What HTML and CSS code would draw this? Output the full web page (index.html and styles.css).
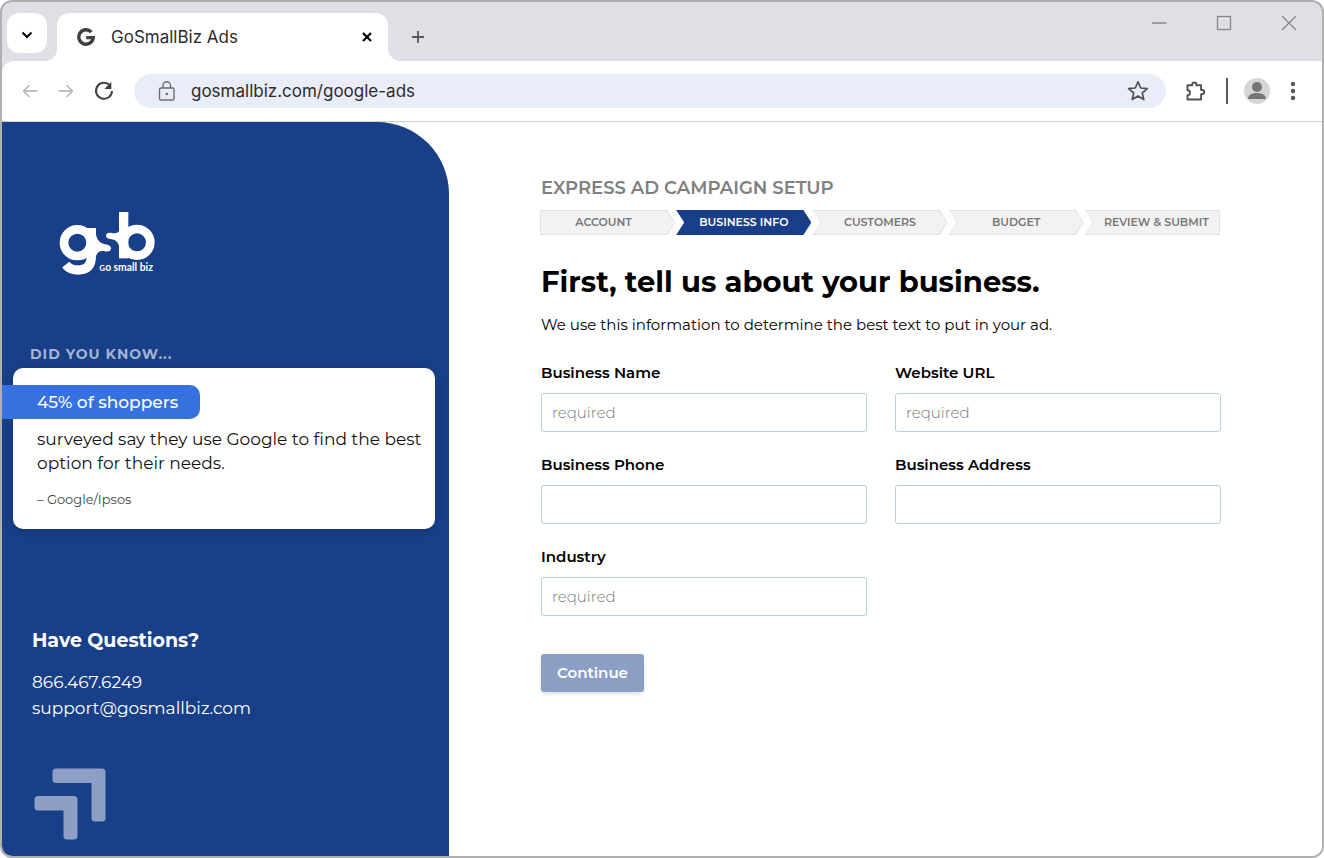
FILE: index.html
```html
<!DOCTYPE html>
<html lang="en">
<head>
<meta charset="utf-8">
<meta name="viewport" content="width=device-width, initial-scale=1">
<title>GoSmallBiz Ads</title>
<link rel="stylesheet" href="styles.css">
</head>
<body>
<div class="window">
  <header class="tabstrip">
    <button class="tab-search" type="button" aria-label="Search tabs">
      <svg width="12" height="8" viewBox="0 0 12 8"><path d="M1.500 1.500 6 6l4.500-4.500" fill="none" stroke="#000" stroke-width="2"/></svg>
    </button>
    <div class="tab">
      <svg class="tab-icon" width="18" height="18" viewBox="0 0 18 18"><path d="M14.400 4.200A7.200 7.200 0 1 0 16.200 9.600H9.200" fill="none" stroke="#3f4043" stroke-width="3.400"/></svg>
      <span class="tab-title">GoSmallBiz Ads</span>
      <button class="icon-btn" type="button" aria-label="Close tab">
        <svg width="10" height="10" viewBox="0 0 10 10"><path d="M1 1l8 8M9 1L1 9" stroke="#000" stroke-width="2.200"/></svg>
      </button>
    </div>
    <button class="icon-btn new-tab" type="button" aria-label="New tab">
      <svg width="12" height="12" viewBox="0 0 12 12"><path d="M6 0v12M0 6h12" stroke="#55575b" stroke-width="1.800"/></svg>
    </button>
    <div class="controls">
      <button class="icon-btn" type="button" aria-label="Minimize"><svg width="16" height="16" viewBox="0 0 16 16"><path d="M1 8h14.500" stroke="#85878b" stroke-width="1.300"/></svg></button>
      <button class="icon-btn" type="button" aria-label="Maximize"><svg width="16" height="16" viewBox="0 0 16 16"><rect x="1.500" y="1.500" width="13" height="13" fill="none" stroke="#85878b" stroke-width="1.300"/></svg></button>
      <button class="icon-btn" type="button" aria-label="Close"><svg width="16" height="16" viewBox="0 0 16 16"><path d="M1 1l14 14M15 1L1 15" stroke="#85878b" stroke-width="1.300"/></svg></button>
    </div>
  </header>

  <div class="toolbar">
    <button class="icon-btn" type="button" aria-label="Back"><svg width="16" height="14" viewBox="0 0 16 14"><path d="M15.500 7H1.500M7.500 1 1.500 7l6 6" fill="none" stroke="#b0b0b0" stroke-width="1.300"/></svg></button>
    <button class="icon-btn" type="button" aria-label="Forward"><svg width="16" height="14" viewBox="0 0 16 14"><path d="M.5 7h14M8.500 1l6 6-6 6" fill="none" stroke="#b0b0b0" stroke-width="1.300"/></svg></button>
    <button class="icon-btn" type="button" aria-label="Reload"><svg width="20" height="20" viewBox="0 0 20 20"><path d="M15.800 4.300A8 8 0 1 0 18 10" fill="none" stroke="#3f4043" stroke-width="2"/><path d="M17.300 1v7h-7z" fill="#3f4043"/></svg></button>
    <div class="address">
      <svg width="18" height="20" viewBox="0 0 18 20"><g fill="none" stroke="#6b6d72" stroke-width="1.400"><rect x="1.500" y="7" width="14.500" height="12" rx="1.500"/><path d="M5 7V4.500a3.700 3.700 0 0 1 7.500 0V7"/></g><circle cx="8.800" cy="13" r="1.300" fill="#6b6d72"/></svg>
      <input class="address-input" type="text" aria-label="Address" value="gosmallbiz.com/google-ads">
      <button class="icon-btn" type="button" aria-label="Bookmark"><svg width="22" height="22" viewBox="0 0 22 22"><path d="M11 1.800l2.700 6.200 6.700.6-5.100 4.400 1.500 6.600L11 16.100l-5.800 3.500 1.500-6.600L1.600 8.600 8.300 8z" fill="none" stroke="#505256" stroke-width="1.700" stroke-linejoin="round"/></svg></button>
    </div>
    <button class="icon-btn" type="button" aria-label="Extensions"><svg width="20" height="20" viewBox="0 0 20 20"><path d="M1.500 4.300H6.200V3.600a2.100 2.100 0 0 1 4.200 0V4.300H15.100V9h1a2.100 2.100 0 0 1 0 4.200h-1V18.500H1.500V14.200a2.400 2.400 0 0 0 0-5z" fill="none" stroke="#505256" stroke-width="1.900" stroke-linejoin="round"/></svg></button>
    <span class="divider"></span>
    <button class="icon-btn" type="button" aria-label="Profile"><svg width="26" height="26" viewBox="0 0 26 26"><circle cx="13" cy="13" r="13" fill="#d6d6d6"/><circle cx="13" cy="9" r="5" fill="#757575"/><path d="M4 21c0-4 4-6 9-6s9 2 9 6z" fill="#757575"/></svg></button>
    <button class="icon-btn" type="button" aria-label="Menu"><svg width="6" height="20" viewBox="0 0 6 20"><g fill="#55575b"><circle cx="3" cy="3" r="2.200"/><circle cx="3" cy="10" r="2.200"/><circle cx="3" cy="17" r="2.200"/></g></svg></button>
  </div>

  <div class="page">
    <aside class="sidebar">
      <svg class="logo" width="98" height="66" viewBox="0 0 294 198" role="img" aria-label="gsb go small biz">
        <g transform="translate(-54 -43)">
          <g fill="none" stroke="#fff" stroke-width="26">
            <circle cx="112" cy="141" r="40"/>
            <circle cx="291" cy="140" r="40"/>
          </g>
          <g fill="none" stroke="#fff" stroke-width="28">
            <path d="M154 97v84c0 29-14 42-41 42-15 0-27-5-36-16"/>
            <path d="M251 49v139"/>
          </g>
          <path d="M166 98c1 28 8 44 29 48 12 2 18 5 18 12 0 8-8 11-18 9-14-3-22 0-27 14z" fill="#fff"/>
          <path d="M240 100c-4 13-12 14-24 12-11-2-18 1-18 8 0 6 5 9 14 10 18 2 25 12 28 34z" fill="#fff"/>
          <text class="logo-text" x="178" y="226"><tspan class="logo-small">G</tspan>o small biz</text>
        </g>
      </svg>

      <section class="fact">
        <h2 class="fact-title">DID YOU KNOW...</h2>
        <div class="card">
          <p class="ribbon">45% of shoppers</p>
          <p class="card-text">surveyed say they use Google to find the best option for their needs.</p>
          <p class="card-source">– Google/Ipsos</p>
        </div>
      </section>

      <section class="contact">
        <h2 class="contact-title">Have Questions?</h2>
        <a class="contact-link" href="tel:8664676249">866.467.6249</a>
        <a class="contact-link" href="mailto:support@gosmallbiz.com">support@gosmallbiz.com</a>
      </section>

      <svg class="arrows" width="72" height="72" viewBox="0 0 72 72" fill="#8d9fc4"><path d="M22 .5h46q3.500 0 3.500 3.500v46q0 3.500-3.500 3.500H61q-3.500 0-3.500-3.500V15H22q-3.500 0-3.500-3.500V4q0-3.500 3.500-3.500z"/><path d="M4 28h36q3.500 0 3.500 3.500V68q0 3.500-3.500 3.500H33q-3.500 0-3.500-3.500V42.500H4q-3.500 0-3.500-3.500v-7.500Q.5 28 4 28z"/></svg>
    </aside>

    <main class="main">
      <h2 class="kicker">EXPRESS AD CAMPAIGN SETUP</h2>
      <ol class="steps">
        <li class="step step-first">ACCOUNT</li>
        <li class="step step-active" aria-current="step">BUSINESS INFO</li>
        <li class="step">CUSTOMERS</li>
        <li class="step">BUDGET</li>
        <li class="step step-last">REVIEW &amp; SUBMIT</li>
      </ol>
      <h1 class="title">First, tell us about your business.</h1>
      <p class="lead">We use this information to determine the best text to put in your ad.</p>
      <form class="form">
        <div class="field"><label for="name">Business Name</label><input id="name" type="text" placeholder="required"></div>
        <div class="field"><label for="url">Website URL</label><input id="url" type="text" placeholder="required"></div>
        <div class="field"><label for="phone">Business Phone</label><input id="phone" type="text"></div>
        <div class="field"><label for="address">Business Address</label><input id="address" type="text"></div>
        <div class="field"><label for="industry">Industry</label><input id="industry" type="text" placeholder="required"></div>
        <div class="actions"><button class="continue" type="submit">Continue</button></div>
      </form>
    </main>
  </div>
</div>
</body>
</html>
```
FILE: styles.css
```css
* { box-sizing: border-box; }

body {
  margin: 0;
  background: #fff;
  color: #000;
  font-family: Montserrat, Inter, sans-serif;
}

h1, h2, p, ol { margin: 0; padding: 0; }
svg { display: block; flex: none; }
button, input { font: inherit; }

.window {
  display: flex;
  flex-direction: column;
  min-height: 100vh;
  border: 2px solid #b0b0b0;
  border-radius: 12px;
  overflow: hidden;
  background: #dfe0e5;
}

.icon-btn {
  display: flex;
  padding: 0;
  border: 0;
  background: none;
}

/* Tab strip */
.tabstrip {
  display: flex;
  height: 59px;
  padding: 11px 25px 0 5px;
}

.tab-search {
  display: grid;
  place-items: center;
  width: 40px;
  height: 40px;
  padding: 4px 0 0;
  border: 0;
  border-radius: 12px;
  background: #fff;
}

.tab {
  position: relative;
  display: flex;
  align-items: center;
  width: 331px;
  height: 48px;
  margin-left: 10px;
  padding: 0 16px 0 20px;
  border-radius: 12px 12px 0 0;
  background: #fff;
}

.tab::before, .tab::after {
  content: "";
  position: absolute;
  bottom: 0;
  width: 12px;
  height: 12px;
}

.tab::before {
  right: 100%;
  background: radial-gradient(circle at 0 0, transparent 12px, #fff 12px);
}

.tab::after {
  left: 100%;
  background: radial-gradient(circle at 100% 0, transparent 12px, #fff 12px);
}

.tab-title {
  flex: 1;
  padding-left: 16px;
  color: #2b2c2f;
  font: 17px/24px Inter, sans-serif;
}

.new-tab { align-self: center; margin-left: 24px; }

.controls {
  display: flex;
  gap: 49px;
  height: 20px;
  margin-left: auto;
  align-items: center;
}

/* Toolbar */
.toolbar {
  display: flex;
  align-items: center;
  height: 61px;
  padding: 0 26px 0 20px;
  gap: 20px;
  border-bottom: 1px solid #cfcfcf;
  border-radius: 12px 0 0;
  background: #fff;
}

.address {
  display: flex;
  flex: 1;
  align-items: center;
  height: 34px;
  padding: 0 17px 0 24px;
  border-radius: 17px;
  background: #e9edf7;
}

.address-input {
  flex: 1;
  min-width: 0;
  padding: 0 0 0 15px;
  border: 0;
  background: none;
  color: #2b2c2f;
  font: 17px/24px Inter, sans-serif;
}

.divider {
  width: 2px;
  height: 26px;
  margin-right: -4px;
  background: #55575b;
}

/* Page */
.page {
  display: flex;
  flex: 1;
  background: #fff;
}

.sidebar {
  flex: 0 0 447px;
  padding: 88px 14px 16px 11px;
  border-radius: 0 72px 0 0;
  background: #183f87;
  color: #fff;
}

.logo { margin-left: 45px; }

.logo-text {
  fill: #fff;
  font: 700 31px Lato, sans-serif;
}

.logo-small { font-size: 24px; }

.fact { margin-top: 68px; }

.fact-title {
  padding-left: 17px;
  color: #a3b3d3;
  font-size: 14px;
  font-weight: 700;
  line-height: 20px;
  letter-spacing: 1px;
}

.card {
  margin-top: 4px;
  padding: 17px 10px 21px 24px;
  border-radius: 10px;
  background: #fff;
  box-shadow: 0 2px 8px rgba(0, 0, 0, .15);
  color: #111;
}

.ribbon {
  width: 198px;
  margin-left: -35px;
  padding-left: 35px;
  border-radius: 0 10px 10px 0;
  background: #3572e0;
  color: #fff;
  font-size: 17px;
  font-weight: 500;
  line-height: 34px;
}

.card-text {
  margin-top: 8px;
  font-size: 17px;
  line-height: 24px;
}

.card-source {
  margin-top: 15px;
  color: #444;
  font-size: 13px;
  line-height: 18px;
}

.contact {
  display: flex;
  flex-direction: column;
  margin-top: 99px;
  padding-left: 19px;
}

.contact-title {
  margin-bottom: 15px;
  font-size: 19px;
  font-weight: 700;
  line-height: 26px;
}

.contact-link {
  color: #fff;
  font-size: 17px;
  line-height: 26px;
  text-decoration: none;
}

.arrows { margin: 47px 0 0 21px; }

.main {
  flex: 1;
  min-width: 0;
  padding: 54px 101px 40px 92px;
}

.kicker {
  color: #808080;
  font-size: 18px;
  font-weight: 600;
  line-height: 24px;
}

.steps {
  display: grid;
  grid-template-columns: repeat(5, 1fr);
  gap: 1px;
  margin: 10px 1px 0 -1px;
  list-style: none;
}

.step {
  --shape: polygon(0 0, calc(100% - 8px) 0, 100% 50%, calc(100% - 8px) 100%, 0 100%, 8px 50%);
  position: relative;
  z-index: 0;
  background: #e3e3e3;
  clip-path: var(--shape);
  color: #777;
  font-size: 11px;
  font-weight: 600;
  line-height: 25px;
  text-align: center;
  white-space: nowrap;
}

.step::before {
  content: "";
  position: absolute;
  inset: 1px;
  z-index: -1;
  background: #f2f2f2;
  clip-path: var(--shape);
}

.step-first {
  --shape: polygon(0 0, calc(100% - 8px) 0, 100% 50%, calc(100% - 8px) 100%, 0 100%);
  padding-right: 8px;
}

.step-active { background: #183f87; color: #fff; }
.step-active::before { background: #183f87; }

.step-last {
  --shape: polygon(0 0, 100% 0, 100% 100%, 0 100%, 8px 50%);
  padding-left: 8px;
}

.title {
  margin-top: 27px;
  font-size: 29px;
  font-weight: 700;
  line-height: 40px;
}

.lead {
  margin-top: 13px;
  font-size: 15px;
  line-height: 20px;
}

.form {
  display: grid;
  grid-template-columns: 1fr 1fr;
  gap: 23px 28px;
  margin-top: 28px;
}

.field {
  display: flex;
  flex-direction: column;
  gap: 10px;
  font-size: 15px;
}

.field label { font-weight: 600; line-height: 20px; }

.field input {
  width: 100%;
  height: 39px;
  padding: 0 10px;
  border: 1px solid #bccfd8;
  border-radius: 3px;
  background: #fff;
}

.field input::placeholder { color: #777; font-weight: 300; opacity: 1; }

.actions { grid-column: 1 / -1; margin-top: 15px; }

.continue {
  padding: 9px 16px;
  border: 0;
  border-radius: 3px;
  background: #8b9fc4;
  box-shadow: 0 2px 4px rgba(0, 0, 0, .12);
  color: #fff;
  font-size: 15px;
  font-weight: 600;
  line-height: 20px;
}
```
